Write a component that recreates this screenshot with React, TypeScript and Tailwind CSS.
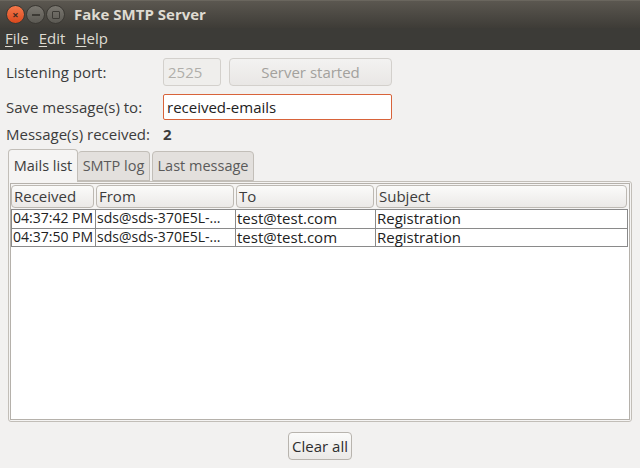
import React from 'react';

const rows = [
  { received: '04:37:42 PM', from: 'sds@sds-370E5L-...', to: 'test@test.com', subject: 'Registration' },
  { received: '04:37:50 PM', from: 'sds@sds-370E5L-...', to: 'test@test.com', subject: 'Registration' },
];

const columns = [
  { label: 'Received', w: 'w-[83px]' },
  { label: 'From', w: 'w-[138px]' },
  { label: 'To', w: 'w-[138px]' },
  { label: 'Subject', w: 'flex-1' },
];

function Menu({ first, rest }: { first: string; rest: string }) {
  return (
    <span>
      <span className="underline underline-offset-2">{first}</span>
      {rest}
    </span>
  );
}

export default function App() {
  return (
    <div className="w-[640px] h-[468px] bg-[#f2f1f0] flex flex-col overflow-hidden text-[15px] text-[#3c3c3c] font-['Open_Sans','DejaVu_Sans',sans-serif]">
      {/* Title bar */}
      <div className="h-[28px] bg-gradient-to-b from-[#5b5750] to-[#3e3c37] flex items-center pl-[6px] border-t border-[#6a665e]">
        <div className="flex items-center gap-[1px]">
          <div className="w-[19px] h-[19px] rounded-full bg-gradient-to-b from-[#f5784a] to-[#d9481c] border border-[#3a3833] flex items-center justify-center">
            <span className="text-[#3b2a22] text-[11px] leading-none font-bold">×</span>
          </div>
          <div className="w-[19px] h-[19px] rounded-full bg-gradient-to-b from-[#7a7770] to-[#5b5953] border border-[#3a3833] flex items-center justify-center">
            <div className="w-[8px] h-[2px] bg-[#3c3a35]" />
          </div>
          <div className="w-[19px] h-[19px] rounded-full bg-gradient-to-b from-[#7a7770] to-[#5b5953] border border-[#3a3833] flex items-center justify-center">
            <div className="w-[8px] h-[8px] border-[1.5px] border-[#3c3a35] rounded-[1px]" />
          </div>
        </div>
        <span className="ml-[9px] text-[#dfdbd2] font-bold text-[15px]">Fake SMTP Server</span>
      </div>

      {/* Menu bar */}
      <div className="h-[22px] bg-[#3c3b37] text-[#dfdbd2] flex items-center gap-[10px] pl-[5px] pb-[1px]">
        <Menu first="F" rest="ile" />
        <Menu first="E" rest="dit" />
        <Menu first="H" rest="elp" />
      </div>

      {/* Content */}
      <div className="flex-1 flex flex-col px-[6px] pt-[8px] pb-[8px]">
        <div className="flex items-center h-[28px]">
          <span className="w-[157px]">Listening port:</span>
          <div className="w-[58px] h-[28px] rounded-[3px] border border-[#d3d0cc] bg-[#efeeec] flex items-center px-[4px] text-[#b0aeaa]">2525</div>
          <button className="ml-[8px] w-[163px] h-[28px] rounded-[4px] border border-[#d3d0cc] bg-gradient-to-b from-[#f3f2f1] to-[#e9e7e5] text-[#a3a19d]">Server started</button>
        </div>

        <div className="flex items-center h-[26px] mt-[8px]">
          <span className="w-[157px]">Save message(s) to:</span>
          <div className="w-[229px] h-[26px] rounded-[2px] border border-[#d8633a] bg-white flex items-center px-[3px] text-[#222]">received-emails</div>
        </div>

        <div className="flex items-center h-[20px] mt-[4px]">
          <span className="w-[157px]">Message(s) received:</span>
          <span className="font-bold">2</span>
        </div>

        {/* Tabs */}
        <div className="flex items-end h-[32px] mt-[5px] ml-[2px] text-[14.5px]">
          <div className="w-[70px] h-[33px] -mb-[1px] rounded-t-[4px] border border-b-0 border-[#c2beb8] bg-[#f5f4f3] flex items-center justify-center z-10">Mails list</div>
          <div className="w-[72px] h-[30px] rounded-t-[4px] border border-l-0 border-[#c2beb8] bg-[#e3e0dd] flex items-center justify-center text-[#5a5a5a]">SMTP log</div>
          <div className="ml-[2px] w-[102px] h-[30px] rounded-t-[4px] border border-[#c2beb8] bg-[#e3e0dd] flex items-center justify-center text-[#5a5a5a]">Last message</div>
        </div>

        <div className="flex-1 ml-[2px] mr-[2px] rounded-[3px] rounded-tl-none border border-[#c2beb8] bg-[#f5f4f3] p-[1px] flex">
          <div className="flex-1 bg-white border border-[#b5b1ab] flex flex-col">
            {/* Header */}
            <div className="flex gap-[2px] pt-[1px] pb-[1px] bg-[#f5f4f3] pr-[2px]">
              {columns.map((c) => (
                <div key={c.label} className={`${c.w} h-[23px] rounded-[4px] border border-[#bdb9b3] bg-gradient-to-b from-[#fbfbfa] to-[#ebe9e7] flex items-center px-[2px] pb-[1px]`}>
                  {c.label}
                </div>
              ))}
            </div>
            {/* Rows */}
            <div className="mr-[1px] border-l border-[#8a8a8a]">
              {rows.map((r) => (
                <div key={r.received} className="flex h-[19px] border-t border-b-0 border-[#8a8a8a] last:border-b text-[#222] border-r whitespace-nowrap leading-[16px]">
                  <div className="w-[84px] px-[1px] border-r border-[#8a8a8a] text-[14px]">{r.received}</div>
                  <div className="w-[140px] px-[1px] border-r border-[#8a8a8a] text-[14px]">{r.from}</div>
                  <div className="w-[140px] px-[1px] border-r border-[#8a8a8a]">{r.to}</div>
                  <div className="flex-1 px-[1px]">{r.subject}</div>
                </div>
              ))}
            </div>
          </div>
        </div>

        <div className="flex justify-center mt-[10px]">
          <button className="w-[64px] h-[28px] rounded-[4px] border border-[#b8b4ae] bg-gradient-to-b from-[#fbfbfa] to-[#ebe9e7] text-[#2e2e2e]">Clear all</button>
        </div>
      </div>
    </div>
  );
}
